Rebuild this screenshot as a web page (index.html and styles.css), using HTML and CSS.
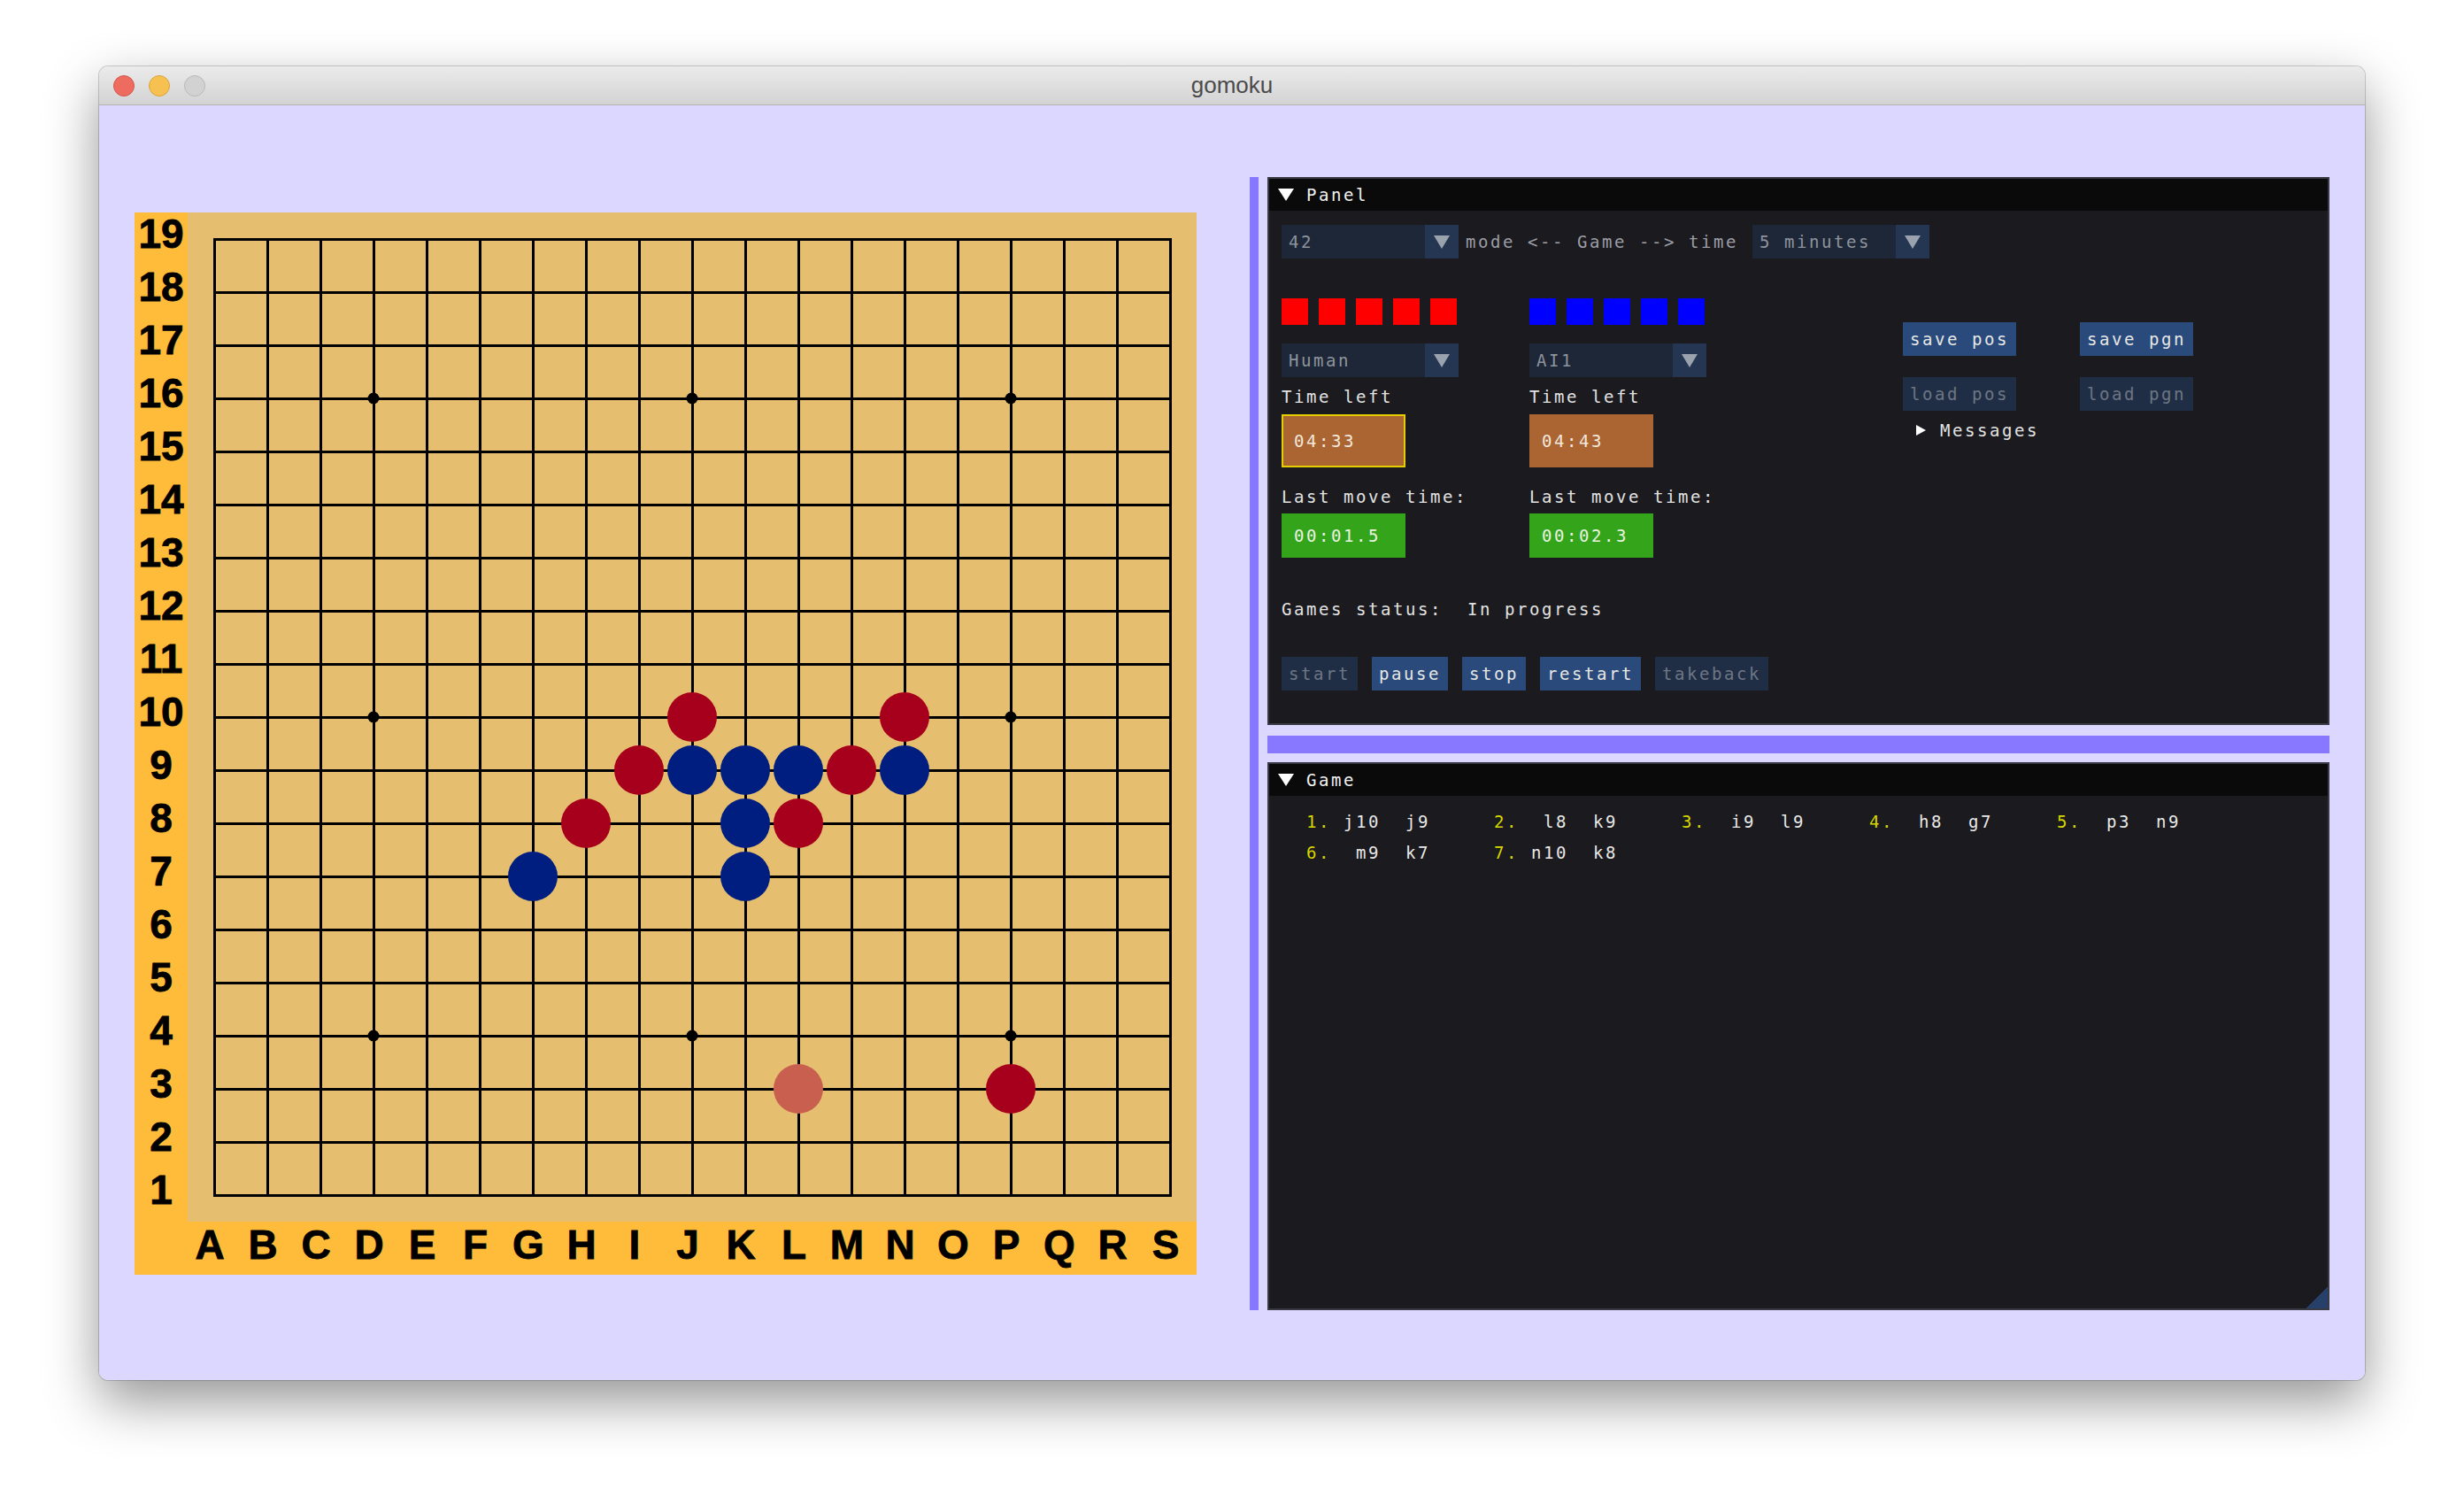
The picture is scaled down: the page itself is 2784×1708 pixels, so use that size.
FILE: index.html
```html
<!DOCTYPE html>
<html lang="en">
<head>
  <meta charset="UTF-8">
  <meta name="viewport" content="width=device-width, initial-scale=1.0">
  <title>gomoku</title>
  <link rel="stylesheet" href="styles.css">
</head>
<body>
  <div class="window">
    <div class="titlebar">
      <div class="lights">
        <span class="light close"></span>
        <span class="light min"></span>
        <span class="light zoom"></span>
      </div>
      <div class="title">gomoku</div>
    </div>

    <div class="content">
      <!--BOARD-->
      <div class="board">
        <div class="ranks">
          <span>19</span><span>18</span><span>17</span><span>16</span><span>15</span>
          <span>14</span><span>13</span><span>12</span><span>11</span><span>10</span>
          <span>9</span><span>8</span><span>7</span><span>6</span><span>5</span>
          <span>4</span><span>3</span><span>2</span><span>1</span>
        </div>
        <svg class="grid" width="1140" height="1140" viewBox="0 0 1140 1140">
          <path class="lines" d="M30 30V1110M90 30V1110M150 30V1110M210 30V1110M270 30V1110M330 30V1110M390 30V1110M450 30V1110M510 30V1110M570 30V1110M630 30V1110M690 30V1110M750 30V1110M810 30V1110M870 30V1110M930 30V1110M990 30V1110M1050 30V1110M1110 30V1110
            M30 30H1110M30 90H1110M30 150H1110M30 210H1110M30 270H1110M30 330H1110M30 390H1110M30 450H1110M30 510H1110M30 570H1110M30 630H1110M30 690H1110M30 750H1110M30 810H1110M30 870H1110M30 930H1110M30 990H1110M30 1050H1110M30 1110H1110"/>
          <g class="stars">
            <circle cx="210" cy="210" r="6.5"/><circle cx="570" cy="210" r="6.5"/><circle cx="930" cy="210" r="6.5"/>
            <circle cx="210" cy="570" r="6.5"/><circle cx="570" cy="570" r="6.5"/><circle cx="930" cy="570" r="6.5"/>
            <circle cx="210" cy="930" r="6.5"/><circle cx="570" cy="930" r="6.5"/><circle cx="930" cy="930" r="6.5"/>
          </g>
          <!-- red: j10 l8 i9 h8 p3 m9 n10 -->
          <g class="red">
            <circle cx="570" cy="570" r="28"/>
            <circle cx="690" cy="690" r="28"/>
            <circle cx="510" cy="630" r="28"/>
            <circle cx="450" cy="690" r="28"/>
            <circle cx="930" cy="990" r="28"/>
            <circle cx="750" cy="630" r="28"/>
            <circle cx="810" cy="570" r="28"/>
          </g>
          <!-- blue: j9 k9 l9 g7 n9 k7 k8 -->
          <g class="blue">
            <circle cx="570" cy="630" r="28"/>
            <circle cx="630" cy="630" r="28"/>
            <circle cx="690" cy="630" r="28"/>
            <circle cx="390" cy="750" r="28"/>
            <circle cx="810" cy="630" r="28"/>
            <circle cx="630" cy="750" r="28"/>
            <circle cx="630" cy="690" r="28"/>
          </g>
          <circle class="ghost" cx="690" cy="990" r="28"/>
        </svg>
        <div class="files">
          <span>A</span><span>B</span><span>C</span><span>D</span><span>E</span><span>F</span><span>G</span>
          <span>H</span><span>I</span><span>J</span><span>K</span><span>L</span><span>M</span><span>N</span>
          <span>O</span><span>P</span><span>Q</span><span>R</span><span>S</span>
        </div>
      </div>

      <!--PANELS-->
      <div class="side">
        <div class="vbar"></div>
        <div class="panes">
          <section class="pane panel">
            <div class="pane-title"><span class="tri-down"></span>Panel</div>
            <div class="pane-body">
              <div class="top-row">
                <div class="combo"><span class="val">42</span><span class="arrow"></span></div>
                <span class="mode-label">mode &lt;-- Game --&gt; time</span>
                <div class="combo"><span class="val">5 minutes</span><span class="arrow"></span></div>
              </div>

              <div class="players">
                <div class="player">
                  <div class="squares red-sq"><i></i><i></i><i></i><i></i><i></i></div>
                  <div class="combo player-combo"><span class="val">Human</span><span class="arrow"></span></div>
                  <p class="label">Time left</p>
                  <div class="clock active">04:33</div>
                  <p class="label last">Last move time:</p>
                  <div class="lap">00:01.5</div>
                </div>
                <div class="player">
                  <div class="squares blue-sq"><i></i><i></i><i></i><i></i><i></i></div>
                  <div class="combo player-combo"><span class="val">AI1</span><span class="arrow"></span></div>
                  <p class="label">Time left</p>
                  <div class="clock">04:43</div>
                  <p class="label last">Last move time:</p>
                  <div class="lap">00:02.3</div>
                </div>
                <div class="io">
                  <div class="io-buttons">
                    <button class="btn">save pos</button>
                    <button class="btn">save pgn</button>
                    <button class="btn off">load pos</button>
                    <button class="btn off">load pgn</button>
                  </div>
                  <div class="tree"><span class="tri-right"></span>Messages</div>
                </div>
              </div>

              <p class="status">Games status:  In progress</p>

              <div class="controls">
                <button class="btn off">start</button>
                <button class="btn">pause</button>
                <button class="btn">stop</button>
                <button class="btn">restart</button>
                <button class="btn off">takeback</button>
              </div>
            </div>
          </section>

          <div class="hsep"></div>

          <section class="pane game">
            <div class="pane-title"><span class="tri-down"></span>Game</div>
            <div class="moves">
              <span class="mv"><b>1.</b> j10  j9</span>
              <span class="mv"><b>2.</b>  l8  k9</span>
              <span class="mv"><b>3.</b>  i9  l9</span>
              <span class="mv"><b>4.</b>  h8  g7</span>
              <span class="mv"><b>5.</b>  p3  n9</span>
              <span class="mv"><b>6.</b>  m9  k7</span>
              <span class="mv"><b>7.</b> n10  k8</span>
            </div>
            <div class="grip"></div>
          </section>
        </div>
      </div>
    </div>
  </div>
</body>
</html>
```

FILE: styles.css
```css
body {
  margin: 0;
  width: 2784px;
  height: 1708px;
  overflow: hidden;
  background-color: #ffffff;
  font-family: "Liberation Sans", Arial, sans-serif;
}
.window {
  margin: 75px 0 0 112px;
  width: 2560px;
  border-radius: 10px;
  overflow: hidden;
  box-shadow: 0 24px 60px rgba(0, 0, 0, 0.42), 0 0 0 1px rgba(0, 0, 0, 0.18);
}

/* title bar */
.titlebar {
  height: 44px;
  box-sizing: border-box;
  display: grid;
  grid-template-columns: 1fr auto 1fr;
  align-items: center;
  background: linear-gradient(#ebebeb, #d3d3d3);
  border-bottom: 1px solid #b4b4b4;
}
.lights {
  display: flex;
  gap: 16px;
  padding-left: 16px;
}
.light {
  width: 24px;
  height: 24px;
  box-sizing: border-box;
  border-radius: 50%;
}
.light.close {
  background: #ee6b60;
  border: 1px solid #d6544b;
}
.light.min {
  background: #f6c150;
  border: 1px solid #dba43b;
}
.light.zoom {
  background: #d2d2d2;
  border: 1px solid #b8b8b8;
}
.title {
  font-size: 26px;
  color: #4b4b4b;
}

.content {
  height: 1440px;
  box-sizing: border-box;
  background-color: #dcd7ff;
  display: flex;
  align-items: flex-start;
  padding: 81px 0 0 40px;
}

/* board */
.board {
  margin-top: 40px;
  display: grid;
  grid-template-columns: 60px 1140px;
  grid-template-rows: 1140px 60px;
  background-color: #ffbb3a;
  font-weight: bold;
  font-size: 46px;
  color: #000000;
  -webkit-text-stroke: 0.8px #000000;
}
.ranks {
  display: flex;
  flex-direction: column;
}
.ranks span {
  height: 60px;
  line-height: 48px;
  text-align: center;
}
.files {
  grid-column: 2;
  display: flex;
  margin-left: -5px;
}
.files span {
  width: 60px;
  line-height: 52px;
  text-align: center;
}
.grid {
  display: block;
  background-color: #e5bf6f;
}
.lines {
  fill: none;
  stroke: #000000;
  stroke-width: 3;
  stroke-linecap: square;
  shape-rendering: crispEdges;
}
.stars circle {
  fill: #000000;
}
.red circle {
  fill: #a6001c;
}
.blue circle {
  fill: #001d80;
}
.ghost {
  fill: #c9604f;
}

/* right side */
.side {
  margin-left: 60px;
  display: flex;
  gap: 10px;
}
.vbar {
  width: 10px;
  background-color: #8878ff;
}
.panes {
  width: 1200px;
  height: 1280px;
  display: flex;
  flex-direction: column;
  font-family: "DejaVu Sans Mono", monospace;
  font-size: 19px;
  letter-spacing: 2.56px;
  color: #e2e2e2;
}
.pane {
  position: relative;
  box-sizing: border-box;
  background-color: #1a1a1f;
  border: 2px solid #393944;
}
.pane.panel {
  height: 619px;
}
.pane.game {
  flex: 1;
}
.pane-title {
  height: 36px;
  display: flex;
  align-items: center;
  padding-left: 10px;
  background-color: #0a0a0a;
  color: #f0f0f0;
}
.tri-down {
  width: 0;
  height: 0;
  border-left: 9px solid transparent;
  border-right: 9px solid transparent;
  border-top: 14px solid #ffffff;
  margin-right: 14px;
}
.tri-right {
  width: 0;
  height: 0;
  border-top: 6px solid transparent;
  border-bottom: 6px solid transparent;
  border-left: 11px solid #ffffff;
  margin-right: 16px;
}
.hsep {
  height: 20px;
  margin: 12px 0 10px;
  background-color: #8878ff;
}

.pane-body {
  padding: 16px 14px 0;
}
.top-row {
  display: flex;
  align-items: center;
  height: 38px;
}
.combo {
  width: 200px;
  height: 38px;
  display: flex;
  background-color: #1e2738;
  color: #8d939d;
}
.combo .val {
  flex: 1;
  padding-left: 8px;
  line-height: 38px;
}
.combo .arrow {
  width: 38px;
  display: flex;
  justify-content: center;
  align-items: center;
  background-color: #243652;
}
.combo .arrow::after {
  content: "";
  border-left: 9px solid transparent;
  border-right: 9px solid transparent;
  border-top: 15px solid #9aa2ae;
}
.mode-label {
  margin: 0 16px 0 8px;
  color: #9a9da5;
}

.players {
  margin-top: 45px;
  display: grid;
  grid-template-columns: 280px 422px auto;
}
.squares {
  display: flex;
  gap: 12px;
}
.squares i {
  width: 30px;
  height: 30px;
}
.red-sq i {
  background-color: #ff0000;
}
.blue-sq i {
  background-color: #0000ff;
}
.player-combo {
  margin-top: 21px;
}
.label {
  margin: 12px 0 0;
  line-height: 20px;
}
.label.last {
  margin-top: 23px;
}
.clock {
  margin-top: 10px;
  width: 140px;
  height: 60px;
  box-sizing: border-box;
  padding-left: 14px;
  line-height: 60px;
  background-color: #ab6533;
  color: #f3e8dc;
}
.clock.active {
  border: 2px solid #e6cf00;
  padding-left: 12px;
  line-height: 56px;
}
.lap {
  margin-top: 9px;
  width: 140px;
  height: 50px;
  box-sizing: border-box;
  padding-left: 14px;
  line-height: 50px;
  background-color: #34a51b;
  color: #e8f3e2;
}
.io {
  padding-top: 27px;
}
.io-buttons {
  display: grid;
  grid-template-columns: 128px 128px;
  column-gap: 72px;
  row-gap: 24px;
}
.tree {
  margin-top: 12px;
  padding-left: 15px;
  display: flex;
  align-items: center;
  line-height: 20px;
}

.status {
  margin: 48px 0 0;
  line-height: 20px;
  white-space: pre;
}
.controls {
  margin-top: 44px;
  display: flex;
  gap: 16px;
}
.btn {
  height: 38px;
  padding: 0 8px;
  border: none;
  font: inherit;
  letter-spacing: inherit;
  text-align: left;
  background-color: #294a7a;
  color: #e6e6e6;
}
.btn.off {
  background-color: #202e45;
  color: #6d7685;
}

/* game list */
.moves {
  margin-top: 12px;
  padding-left: 42px;
  display: grid;
  grid-template-columns: repeat(5, 212px);
}
.mv {
  line-height: 35px;
  white-space: pre;
  color: #e8e8e8;
}
.mv b {
  font-weight: normal;
  color: #d6d600;
}
.grip {
  position: absolute;
  right: 0;
  bottom: 0;
  width: 24px;
  height: 24px;
  background: linear-gradient(135deg, transparent 50%, #26406a 50%);
}
```
